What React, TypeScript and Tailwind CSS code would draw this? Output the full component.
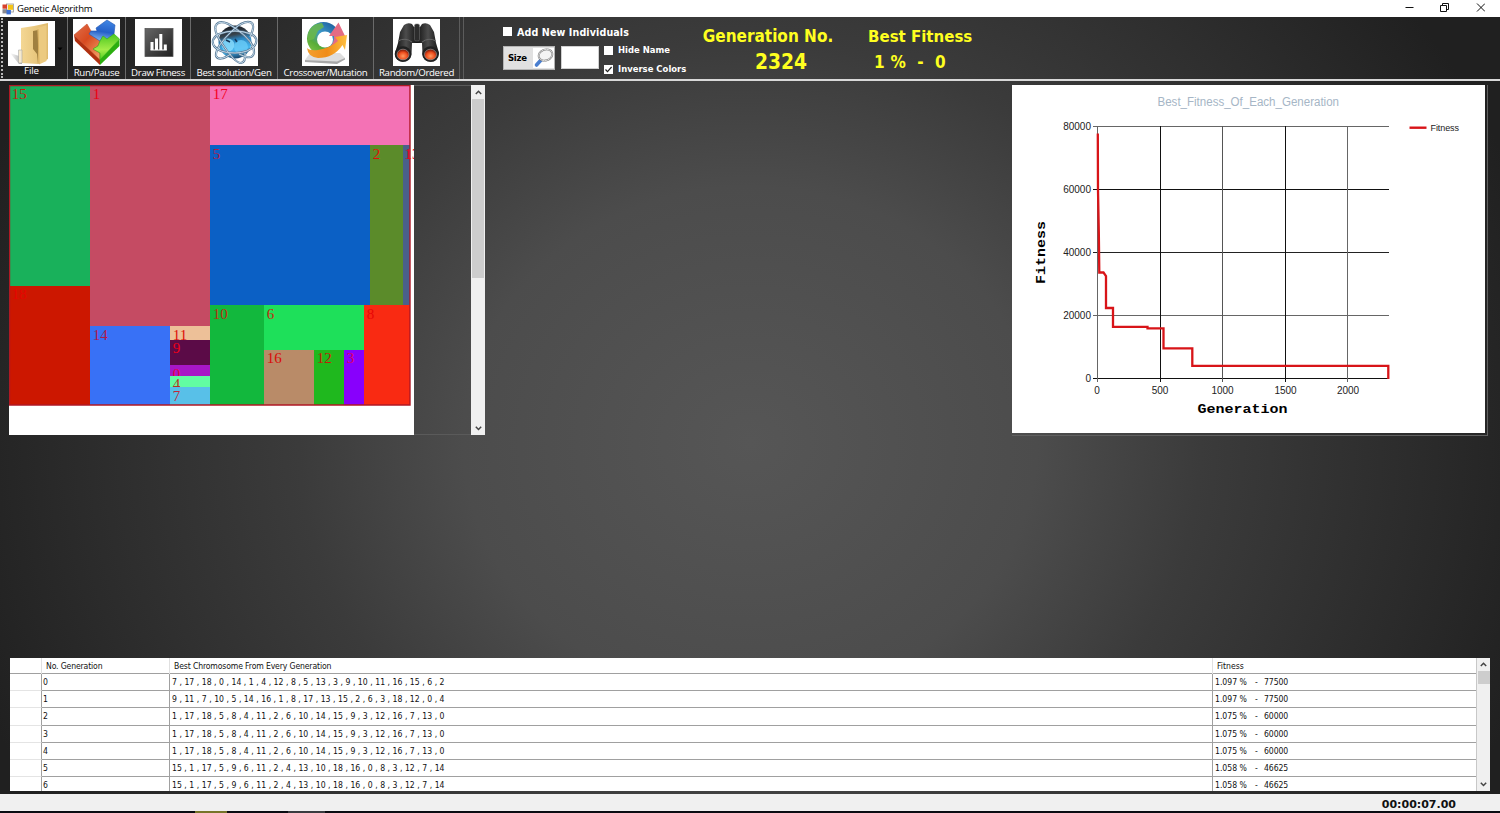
import React from "react";

const blocks = [
  { x: 0, y: 0, w: 81, h: 201, fill: "#19b15b", label: "15", ink: "#c81e10", base: 14 },
  { x: 0, y: 201, w: 81, h: 119, fill: "#cc1700", label: "18", ink: "#e60500", base: 13 },
  { x: 81, y: 0, w: 120, h: 241, fill: "#c54b63", label: "1", ink: "#ee0010", base: 14 },
  { x: 81, y: 241, w: 80, h: 79, fill: "#3871f6", label: "14", ink: "#b01848", base: 14 },
  { x: 161, y: 241, w: 40, h: 14, fill: "#edc098", label: "11", ink: "#dd1008", base: 14 },
  { x: 161, y: 255, w: 40, h: 25, fill: "#5b0b47", label: "9", ink: "#f00018", base: 13 },
  { x: 161, y: 280, w: 40, h: 11, fill: "#a817c6", label: "0", ink: "#ea0040", base: 14 },
  { x: 161, y: 291, w: 40, h: 11, fill: "#62fca2", label: "4", ink: "#b83020", base: 13 },
  { x: 161, y: 302, w: 40, h: 18, fill: "#58c0e8", label: "7", ink: "#c02838", base: 14 },
  { x: 201, y: 0, w: 200, h: 60, fill: "#f472b5", label: "17", ink: "#f4001c", base: 14 },
  { x: 201, y: 60, w: 160, h: 160, fill: "#0b60c5", label: "5", ink: "#b01c48", base: 14 },
  { x: 361, y: 60, w: 33, h: 160, fill: "#5b8b2a", label: "2", ink: "#e01008", base: 14 },
  { x: 394, y: 60, w: 7, h: 160, fill: "#4a608a", label: "13", ink: "#f00010", base: 14 },
  { x: 201, y: 220, w: 54, h: 100, fill: "#12b83d", label: "10", ink: "#b83010", base: 14 },
  { x: 255, y: 220, w: 100, h: 45, fill: "#1ee05a", label: "6", ink: "#c02c10", base: 14 },
  { x: 255, y: 265, w: 50, h: 55, fill: "#b98b68", label: "16", ink: "#d80c08", base: 13 },
  { x: 305, y: 265, w: 30, h: 55, fill: "#1fb81e", label: "12", ink: "#c02008", base: 13 },
  { x: 335, y: 265, w: 20, h: 55, fill: "#8800fc", label: "3", ink: "#e00060", base: 13 },
  { x: 355, y: 220, w: 46, h: 100, fill: "#f92a12", label: "8", ink: "#e80606", base: 14 },
];

const rows = [
  ["0", "7 , 17 , 18 , 0 , 14 , 1 , 4 , 12 , 8 , 5 , 13 , 3 , 9 , 10 , 11 , 16 , 15 , 6 , 2", "1.097 %", "77500"],
  ["1", "9 , 11 , 7 , 10 , 5 , 14 , 16 , 1 , 8 , 17 , 13 , 15 , 2 , 6 , 3 , 18 , 12 , 0 , 4", "1.097 %", "77500"],
  ["2", "1 , 17 , 18 , 5 , 8 , 4 , 11 , 2 , 6 , 10 , 14 , 15 , 9 , 3 , 12 , 16 , 7 , 13 , 0", "1.075 %", "60000"],
  ["3", "1 , 17 , 18 , 5 , 8 , 4 , 11 , 2 , 6 , 10 , 14 , 15 , 9 , 3 , 12 , 16 , 7 , 13 , 0", "1.075 %", "60000"],
  ["4", "1 , 17 , 18 , 5 , 8 , 4 , 11 , 2 , 6 , 10 , 14 , 15 , 9 , 3 , 12 , 16 , 7 , 13 , 0", "1.075 %", "60000"],
  ["5", "15 , 1 , 17 , 5 , 9 , 6 , 11 , 2 , 4 , 13 , 10 , 18 , 16 , 0 , 8 , 3 , 12 , 7 , 14", "1.058 %", "46625"],
  ["6", "15 , 1 , 17 , 5 , 9 , 6 , 11 , 2 , 4 , 13 , 10 , 18 , 16 , 0 , 8 , 3 , 12 , 7 , 14", "1.058 %", "46625"],
];

const horizontalGrid = [
  { y: 126.5, stroke: "#666" },
  { y: 189.5, stroke: "#111" },
  { y: 252.5, stroke: "#222" },
  { y: 315.5, stroke: "#666" },
  { y: 378.5, stroke: "#111" },
];

const verticalGrid = [
  { x: 1097.5, stroke: "#666" },
  { x: 1160.5, stroke: "#111" },
  { x: 1222.5, stroke: "#555" },
  { x: 1285.5, stroke: "#111" },
  { x: 1347.5, stroke: "#666" },
];

function AppIcon() {
  return (
    <svg width="12" height="12" viewBox="0 0 12 12">
      <rect x="4.500" y="1" width="7" height="8" fill="#f4f4f4" stroke="#9a9a9a" strokeWidth="0.8" />
      <rect x="0.5" y="1.5" width="4.6" height="4.2" fill="#d8402c" />
      <rect x="6" y="1.8" width="5" height="5" fill="#f5c518" />
      <rect x="0.5" y="6.2" width="5" height="4.2" fill="#8a8a90" />
      <rect x="4.5" y="7" width="4.400" height="4.4" fill="#3b6fd4" />
    </svg>
  );
}

function FolderIcon() {
  return (
    <svg width="47" height="45" viewBox="0 0 47 45">
      <defs>
        <linearGradient id="folderFront" x1="0" x2="1">
          <stop offset="0" stopColor="#f4d794" />
          <stop offset="1" stopColor="#dfba6c" />
        </linearGradient>
        <linearGradient id="folderShade" x1="1" x2="0">
          <stop offset="0" stopColor="#888" />
          <stop offset="1" stopColor="#fff" />
        </linearGradient>
      </defs>
      <rect width="47" height="45" fill="#fff" />
      <path d="M2 32 L14 36 V43 H11 Z" fill="url(#folderShade)" opacity="0.7" />
      <path d="M13 7 L26 5 L40 2 V38 L30 43 L13 42 Z" fill="url(#folderFront)" />
      <path d="M10.500 29 h3.500 v13 h-3.500z" fill="#f6ead0" stroke="#aaa" strokeWidth="0.6" />
      <path d="M25 10 L30 9 V43 L29 33 L25 28 Z" fill="#a08040" />
      <path d="M29.500 7 L38.500 4 V40 L31 43.500 Z" fill="#ecca80" />
      <path d="M30 8 L31 43" stroke="#cfa655" strokeWidth="0.8" />
    </svg>
  );
}

function PuzzleIcon() {
  return (
    <svg width="47" height="47" viewBox="0 0 47 47" className="shrink-0">
      <defs>
        <linearGradient id="pieceBlue" x1="0.6" y1="0" x2="0.4" y2="1">
          <stop offset="0" stopColor="#3f86e4" />
          <stop offset="0.55" stopColor="#2560c8" />
          <stop offset="1" stopColor="#86b8f0" />
        </linearGradient>
        <linearGradient id="pieceRed" x1="0" y1="0" x2="0.8" y2="1">
          <stop offset="0" stopColor="#e0704c" />
          <stop offset="0.5" stopColor="#d84a20" />
          <stop offset="1" stopColor="#f09860" />
        </linearGradient>
        <linearGradient id="pieceGreen" x1="0" y1="0" x2="0" y2="1">
          <stop offset="0" stopColor="#4cc820" />
          <stop offset="0.6" stopColor="#a4ec48" />
          <stop offset="1" stopColor="#50cc20" />
        </linearGradient>
      </defs>
      <rect width="47" height="47" fill="#fff" />
      <path d="M1 16 L27 40 L27 46 L2 22 Z" fill="#b03010" />
      <path d="M27 40 L46.500 20 L46.500 27 L27 46 Z" fill="#2cae10" />
      <path d="M1 16 L14 5 L18 12 L17 15 L27 22 L25 27 L20 30 L27 34 L27 41 Z" fill="url(#pieceRed)" stroke="#c84a28" strokeWidth="0.6" />
      <path d="M18 12 L24 12 L23 9 L34 1 L42 6 L41 15 L34 20 L30 17 L27 22 L16 15 Z" fill="url(#pieceBlue)" stroke="#2456b0" strokeWidth="0.6" />
      <path d="M27 22 L30 17 L34 20 L41 15 L46.500 20 L27 41 L27 34 L20 30 L25 27 Z" fill="url(#pieceGreen)" stroke="#2cae10" strokeWidth="0.6" />
    </svg>
  );
}

function BarsIcon() {
  return (
    <svg width="47" height="47" viewBox="0 0 47 47" className="shrink-0">
      <defs>
        <linearGradient id="barsTile" x1="0" y1="0" x2="1" y2="1">
          <stop offset="0" stopColor="#666" />
          <stop offset="1" stopColor="#202020" />
        </linearGradient>
      </defs>
      <rect width="47" height="47" fill="#fff" />
      <rect x="10" y="9.500" width="28" height="28" fill="url(#barsTile)" stroke="#555" strokeWidth="0.8" />
      <path d="M15.500 23h3v8h-3z M20 19.500h3v11.500h-3z M24.300 15h3v16h-3z M28.800 25.500h3v5.500h-3z" fill="#fff" />
      <path d="M15.500 31h16.300" stroke="#fff" />
    </svg>
  );
}

function AtomIcon() {
  return (
    <svg width="47" height="47" viewBox="0 0 47 47" className="shrink-0">
      <defs>
        <linearGradient id="atomCore" x1="0.3" y1="0" x2="0.5" y2="1">
          <stop offset="0" stopColor="#15181e" />
          <stop offset="0.3" stopColor="#38444e" />
          <stop offset="0.45" stopColor="#2a84c0" />
          <stop offset="0.75" stopColor="#48b8f0" />
          <stop offset="1" stopColor="#184870" />
        </linearGradient>
      </defs>
      <rect width="47" height="47" fill="#fff" />
      <circle cx="24" cy="23" r="16.500" fill="url(#atomCore)" />
      <circle cx="17" cy="26" r="6.500" fill="#8ce0ff" opacity="0.8" />
      <circle cx="30" cy="28" r="7" fill="#6accf8" opacity="0.8" />
      <path d="M15 21 L19 23 M24 20 L26 23" fill="none" stroke="#12385c" strokeWidth="1.500" />
      <g fill="none" stroke="#5c7c98" strokeWidth="2.200">
        <path d="M5 6 Q10 -1 24 9 Q44 23 43 34 Q41 42 28 35" />
        <path d="M41 4 Q34 0 22 11 Q4 28 5 37 Q8 43 20 35" />
        <path d="M8 15 Q24 9 40 15 Q48 19 44 26 Q38 34 24 34 Q8 34 3 27 Q-1 20 8 15" />
        <path d="M5 6 Q2 12 12 26 Q24 44 30 44 Q35 43 34 34" />
        <path d="M41 4 Q44 8 39 18" />
      </g>
      <g fill="none" stroke="#c0d6e6" strokeWidth="1">
        <path d="M5 6 Q10 -1 24 9 Q44 23 43 34 Q41 42 28 35" />
        <path d="M41 4 Q34 0 22 11 Q4 28 5 37 Q8 43 20 35" />
        <path d="M8 15 Q24 9 40 15 Q48 19 44 26 Q38 34 24 34 Q8 34 3 27 Q-1 20 8 15" />
        <path d="M5 6 Q2 12 12 26 Q24 44 30 44 Q35 43 34 34" />
        <path d="M41 4 Q44 8 39 18" />
      </g>
    </svg>
  );
}

function CrossoverIcon() {
  return (
    <svg width="47" height="47" viewBox="0 0 47 47" className="shrink-0">
      <defs>
        <linearGradient id="ringTone" x1="0.8" y1="0" x2="0.1" y2="1">
          <stop offset="0" stopColor="#1c5c9c" />
          <stop offset="0.4" stopColor="#3c98c8" />
          <stop offset="0.7" stopColor="#58ac38" />
          <stop offset="1" stopColor="#88c848" />
        </linearGradient>
        <linearGradient id="orangeTone" x1="0" x2="1">
          <stop offset="0" stopColor="#f4a030" />
          <stop offset="0.5" stopColor="#f08c18" />
          <stop offset="1" stopColor="#ffc040" />
        </linearGradient>
      </defs>
      <rect width="47" height="47" fill="#fff" />
      <path d="M3 41 L8 34 L38 34 L43 39 L35 44 Z" fill="#dedede" />
      <path d="M3 41 L35 42.500 L43 39 V40.500 L35 45 L3 43Z" fill="#a8a8a8" />
      <circle cx="21.500" cy="19.500" r="16.500" fill="url(#ringTone)" />
      <path d="M8 10 Q12 4 20 4 L22 8 L16 12 L12 20 L6 22 Q5 14 8 10Z" fill="#6cb848" opacity="0.85" />
      <circle cx="23" cy="20.500" r="8" fill="#fff" />
      <path d="M27 29 Q33 23 32 17 H27 L36.500 3.500 L43 17 H39.500 Q39 25 32 31Z" fill="#e46c84" />
      <path d="M5 29 Q8 32 16 31 Q28 29 36 22 L33 18 L45 16 L43 31 L40.500 26 Q32 39 16 39 Q6 38 5 29Z" fill="url(#orangeTone)" />
    </svg>
  );
}

function BinocularsIcon() {
  return (
    <svg width="47" height="47" viewBox="0 0 47 47" className="shrink-0">
      <defs>
        <linearGradient id="tubeTone" x1="0" x2="1">
          <stop offset="0" stopColor="#111" />
          <stop offset="0.25" stopColor="#4c4c4c" />
          <stop offset="0.5" stopColor="#151515" />
          <stop offset="0.75" stopColor="#4c4c4c" />
          <stop offset="1" stopColor="#151515" />
        </linearGradient>
        <radialGradient id="lensTone" cx="0.5" cy="0.65" r="0.6">
          <stop offset="0" stopColor="#ff9a60" />
          <stop offset="0.6" stopColor="#ee4c1c" />
          <stop offset="1" stopColor="#7c1a08" />
        </radialGradient>
      </defs>
      <rect width="47" height="47" fill="#fff" />
      <path d="M11 6 Q15 3 19 5 L21 8 H27 L29 5 Q33 3 37 6 L41 13 L43 24 L46 34 Q45 43 37.500 43 Q30 42 29.500 35 L29 24 H19 L18.500 36 Q17 43 9.500 43 Q2 42 2 34 L5 24 L7 13 Z" fill="url(#tubeTone)" />
      <rect x="21.500" y="5" width="5" height="17" rx="1.500" fill="#2c2c2c" stroke="#777" strokeWidth="0.500" />
      <path d="M5 22 Q12 18 19 23 M43 22 Q36 18 29 23" stroke="#666" strokeWidth="1" fill="none" />
      <ellipse cx="10" cy="35" rx="8.300" ry="7.800" fill="#202020" />
      <ellipse cx="37.500" cy="35" rx="8.300" ry="7.800" fill="#202020" />
      <ellipse cx="10" cy="35.500" rx="6" ry="5.300" fill="url(#lensTone)" stroke="#aaa" strokeWidth="0.600" />
      <ellipse cx="37.500" cy="35.500" rx="6" ry="5.300" fill="url(#lensTone)" stroke="#aaa" strokeWidth="0.600" />
    </svg>
  );
}

function MagnifierIcon() {
  return (
    <svg width="21" height="20" viewBox="0 0 21 20">
      <rect width="21" height="20" fill="#fff" />
      <path d="M3.500 17 L8 12" stroke="#4a7fd0" strokeWidth="3.600" strokeLinecap="round" />
      <ellipse cx="12.500" cy="7" rx="7" ry="5.500" transform="rotate(-20 12.500 7)" fill="#f4f4f4" stroke="#777" strokeWidth="1.800" />
      <ellipse cx="12.500" cy="7" rx="7" ry="5.500" transform="rotate(-20 12.500 7)" fill="none" stroke="#ddd" strokeWidth="0.900" />
    </svg>
  );
}

function Chevron({ down = false }: { down?: boolean }) {
  return (
    <svg width="7" height="5" viewBox="0 0 7 5">
      <path d={down ? "M0.8 0.8 L3.5 3.5 L6.2 0.8" : "M0.8 4 L3.5 1.3 L6.2 4"} fill="none" stroke="#444" strokeWidth="1.500" />
    </svg>
  );
}

function Tool({ width, label, children }: { width: string; label: string; children: React.ReactNode }) {
  return (
    <div className={`${width} flex shrink-0 flex-col items-center border-l border-[#6a6a6a] pt-[2px]`}>
      {children}
      <span className="whitespace-nowrap font-[family-name:'Open_Sans',sans-serif] text-[9.7px] leading-[14px] tracking-[-0.34px] text-white">{label}</span>
    </div>
  );
}

function TitleBar() {
  return (
    <header className="flex h-[17px] shrink-0 items-center bg-white pl-[2px]">
      <AppIcon />
      <span className="ml-[3px] font-[family-name:'Open_Sans',sans-serif] text-[9.5px] leading-[16px] tracking-[-0.26px] text-black">Genetic Algorithm</span>
      <div className="ml-auto flex items-center pr-[15px]">
        <svg width="80" height="12" viewBox="0 0 80 12" fill="none" stroke="#111" strokeWidth="1">
          <path d="M0.500 4.500 H8.500" />
          <path d="M35.500 2.500 h6 v6 h-6z M37.500 2.500 v-2 h6 v6 h-2" />
          <path d="M72 0.500 L80 8.500 M80 0.500 L72 8.500" />
        </svg>
      </div>
    </header>
  );
}

function Toolbar() {
  return (
    <div className="flex h-[64px] shrink-0 border-b-2 border-[#d8d8d8]">
      <div className="ml-px mt-px h-[60px] w-0 border-l-2 border-dotted border-[#b8b8b8]" />
      <div className="relative flex w-[64px] shrink-0 flex-col pl-[5px] pt-[4px]">
        <FolderIcon />
        <span className="mt-[-2px] w-[47px] text-center font-[family-name:'Open_Sans',sans-serif] text-[9.7px] leading-[14px] tracking-[-0.12px] text-white">File</span>
        <svg className="absolute left-[54px] top-[30px]" width="6" height="4" viewBox="0 0 6 4">
          <path d="M0.500 0.500 h5 L3 3.500z" fill="#000" />
        </svg>
      </div>
      <Tool width="w-[58px]" label="Run/Pause"><PuzzleIcon /></Tool>
      <Tool width="w-[65px]" label="Draw Fitness"><BarsIcon /></Tool>
      <Tool width="w-[87px]" label="Best solution/Gen"><AtomIcon /></Tool>
      <Tool width="w-[96px]" label="Crossover/Mutation"><CrossoverIcon /></Tool>
      <Tool width="w-[86px]" label="Random/Ordered"><BinocularsIcon /></Tool>
      <div className="h-full w-[5px] shrink-0 border-x border-[#5c5c5c]" />
      <div className="ml-[39px] flex w-[190px] shrink-0 flex-col pt-[8px] font-['DejaVu_Sans_Condensed','DejaVu_Sans'] font-bold text-white">
        <div className="flex h-[13px] items-center">
          <span className="size-[9px] bg-white" />
          <span className="ml-[5px] whitespace-nowrap text-[10.6px] leading-[12px] tracking-[0.12px]">Add New Individuals</span>
        </div>
        <div className="mt-[6px] flex">
          <div className="mt-[2px] flex h-[24px] w-[52px] items-center justify-between border border-[#b4b4b4] bg-[#e1e1e1] pl-[4px]">
            <span className="text-[9.5px] tracking-[-0.3px] text-black">Size</span>
            <MagnifierIcon />
          </div>
          <div className="ml-[6px] mt-[2px] h-[23px] w-[38px] border border-[#d0d0d0] bg-white" />
          <div className="ml-[5px] flex flex-col gap-[7px]">
            <div className="flex h-[12px] items-center">
              <span className="size-[9px] bg-white" />
              <span className="ml-[5px] whitespace-nowrap text-[9.4px] leading-[12px] tracking-[0.02px]">Hide Name</span>
            </div>
            <div className="flex h-[12px] items-center">
              <svg width="9" height="9" viewBox="0 0 9 9">
                <rect width="9" height="9" fill="#fff" />
                <path d="M1.500 4.500 L3.500 6.600 L7.600 2" stroke="#222" strokeWidth="1.200" fill="none" />
              </svg>
              <span className="ml-[5px] whitespace-nowrap text-[9.4px] leading-[12px] tracking-[0.02px]">Inverse Colors</span>
            </div>
          </div>
        </div>
      </div>
      <div className="flex font-['DejaVu_Sans_Condensed','DejaVu_Sans'] font-bold text-[#ffff20]">
        <div className="ml-[7px] flex w-[136px] flex-col items-center pt-[9px]">
          <span className="whitespace-nowrap text-[17px] leading-[20px]">Generation No.</span>
          <span className="ml-[26px] mt-[3px] text-[20.8px] leading-[26px]">2324</span>
        </div>
        <div className="ml-[32px] flex w-[110px] flex-col pt-[9px]">
          <span className="whitespace-nowrap text-[16.7px] leading-[20px]">Best Fitness</span>
          <span className="ml-[6px] mt-[4px] whitespace-pre text-[17px] leading-[24px] tracking-[0.25px]">1 %  -  0</span>
        </div>
      </div>
    </div>
  );
}

function LayoutCanvas() {
  return (
    <section className="flex h-[350px] w-[476px]">
      <div className="h-full w-[405px] bg-white">
        <svg width="405" height="350" viewBox="0 0 405 350" fontFamily="'Liberation Serif', serif" fontSize="15">
          {blocks.map((b) => (
            <rect key={b.label} x={b.x} y={b.y} width={b.w} height={b.h} fill={b.fill} shapeRendering="crispEdges" />
          ))}
          <path d="M0.500 0.500 H401 V320 H0.500Z" fill="none" stroke="#b01824" strokeWidth="1.400" />
          {blocks.map((b) => (
            <svg key={b.label} x={b.x} y={b.y} width={b.label === "13" ? 11 : b.w} height={b.h}>
              <text x={b.label === "13" ? 1.5 : 2.7} y={b.base} fill={b.ink}>{b.label}</text>
            </svg>
          ))}
        </svg>
      </div>
      <div className="flex-1 border-y border-[#5a5a5a]" />
      <div className="flex w-[14px] flex-col items-center bg-[#f0f0f0]">
        <div className="flex h-[14px] items-center"><Chevron /></div>
        <div className="h-[179px] w-[12px] bg-[#cdcdcd]" />
        <div className="mt-auto flex h-[14px] items-center"><Chevron down /></div>
      </div>
    </section>
  );
}

function FitnessChart() {
  return (
    <section className="h-[351px] w-[476px] border-b border-r border-[#606060]">
      <svg width="473" height="348" viewBox="1012 85 473 348" className="bg-white" fontFamily="'Liberation Sans', Arial, sans-serif" fontSize="10" fill="#222">
        <text x="1157.500" y="106" fontSize="12" fill="#a6b6c6" textLength="181.500" lengthAdjust="spacingAndGlyphs">Best_Fitness_Of_Each_Generation</text>
        <g strokeWidth="1" shapeRendering="crispEdges">
          {horizontalGrid.map((line) => (
            <path key={line.y} d={`M1093 ${line.y} H1389`} stroke={line.stroke} />
          ))}
          {verticalGrid.map((line) => (
            <path key={line.x} d={`M${line.x} 126 V382`} stroke={line.stroke} />
          ))}
        </g>
        <g textAnchor="end">
          <text x="1091" y="130">80000</text>
          <text x="1091" y="193">60000</text>
          <text x="1091" y="256">40000</text>
          <text x="1091" y="319">20000</text>
          <text x="1091" y="382">0</text>
        </g>
        <g textAnchor="middle">
          <text x="1097" y="394">0</text>
          <text x="1160" y="394">500</text>
          <text x="1222.500" y="394">1000</text>
          <text x="1285.500" y="394">1500</text>
          <text x="1348" y="394">2000</text>
        </g>
        <path d="M1097.800 133.500 L1098 190 L1098.800 232 L1099.300 272.500 H1103.500 L1106 276 V308 H1113 V326.800 H1147.500 V328.300 H1163.500 V348.300 H1192.300 V365.800 H1388.300 V379" fill="none" stroke="#d81418" strokeWidth="2.300" />
        <g fontFamily="'Liberation Mono', 'Courier New', monospace" fontSize="13.500" fontWeight="bold" fill="#000">
          <text x="1197.500" y="413" textLength="90" lengthAdjust="spacingAndGlyphs">Generation</text>
          <text transform="translate(1045 284) rotate(-90)" textLength="63" lengthAdjust="spacingAndGlyphs">Fitness</text>
        </g>
        <path d="M1409.500 127.700 H1426.500" stroke="#d81418" strokeWidth="2.400" />
        <text x="1430.500" y="131" fontSize="9" textLength="28.500">Fitness</text>
      </svg>
    </section>
  );
}

function GenerationTable() {
  return (
    <section className="mx-[10px] flex h-[133px] overflow-hidden bg-white font-['DejaVu_Sans_Condensed','DejaVu_Sans'] text-[8.6px] text-[#111]">
      <div className="flex-1">
        <div className="grid h-[16px] grid-cols-[32px_128px_1043px_1fr] border-b border-[#a0a0a0] leading-[17px] tracking-[-0.14px]">
          <div className="border-r border-[#e0e0e0]" />
          <div className="border-r border-[#e0e0e0] pl-[4px]">No. Generation</div>
          <div className="border-r border-[#e0e0e0] pl-[4px]">Best Chromosome From Every Generation</div>
          <div className="pl-[4px] tracking-normal">Fitness</div>
        </div>
        {rows.map(([id, genes, pct, score]) => (
          <div key={id} className="grid h-[17.200px] grid-cols-[32px_128px_1043px_1fr] leading-[17.400px]">
            <div className="border-b border-r border-b-[#e4e4e4] border-r-[#a0a0a0]" />
            <div className="h-[17.200px] border-b border-r border-[#a0a0a0] pl-[1px]">{id}</div>
            <div className="h-[17.200px] whitespace-nowrap border-b border-r border-[#a0a0a0] pl-[2px] tracking-[0.028px]">{genes}</div>
            <div className="flex h-[17.200px] whitespace-nowrap border-b border-[#a0a0a0] pl-[2px]">
              <span className="w-[40px]">{pct}</span>
              <span className="w-[9px]">-</span>
              <span className="tracking-[-0.1px]">{score}</span>
            </div>
          </div>
        ))}
      </div>
      <div className="flex w-[14px] flex-col items-center border-l border-[#c8c8c8] bg-[#f0f0f0]">
        <div className="flex h-[13px] items-center"><Chevron /></div>
        <div className="h-[13px] w-[12px] bg-[#cdcdcd]" />
        <div className="mt-auto flex h-[13px] items-center"><Chevron down /></div>
      </div>
    </section>
  );
}

export default function App() {
  return (
    <div className="flex h-[813px] w-[1500px] flex-col overflow-hidden bg-[#222]">
      <TitleBar />
      <main className="flex h-[777px] shrink-0 flex-col bg-[radial-gradient(ellipse_820px_730px_at_750px_425px,#565656_0%,#4c4c4c_35%,#3b3b3b_55%,#2b2b2b_82%,#202020_100%)]">
        <Toolbar />
        <div className="mt-[4px] flex items-start justify-between pl-[9px] pr-[12px]">
          <LayoutCanvas />
          <FitnessChart />
        </div>
        <div className="mt-auto pb-[3px]">
          <GenerationTable />
        </div>
      </main>
      <footer className="flex h-[17px] shrink-0 items-center justify-end bg-[#f0f0f0] pr-[44px]">
        <span className="mt-[4px] font-['DejaVu_Sans'] text-[11px] font-bold leading-[14px] text-[#111]">00:00:07.00</span>
      </footer>
      <div className="flex h-[2px] shrink-0 bg-[#0a0c12]">
        <div className="ml-[195px] h-full w-[32px] bg-[#77752a]" />
        <div className="ml-[61px] h-full w-[37px] bg-[#3a3c40]" />
      </div>
    </div>
  );
}
